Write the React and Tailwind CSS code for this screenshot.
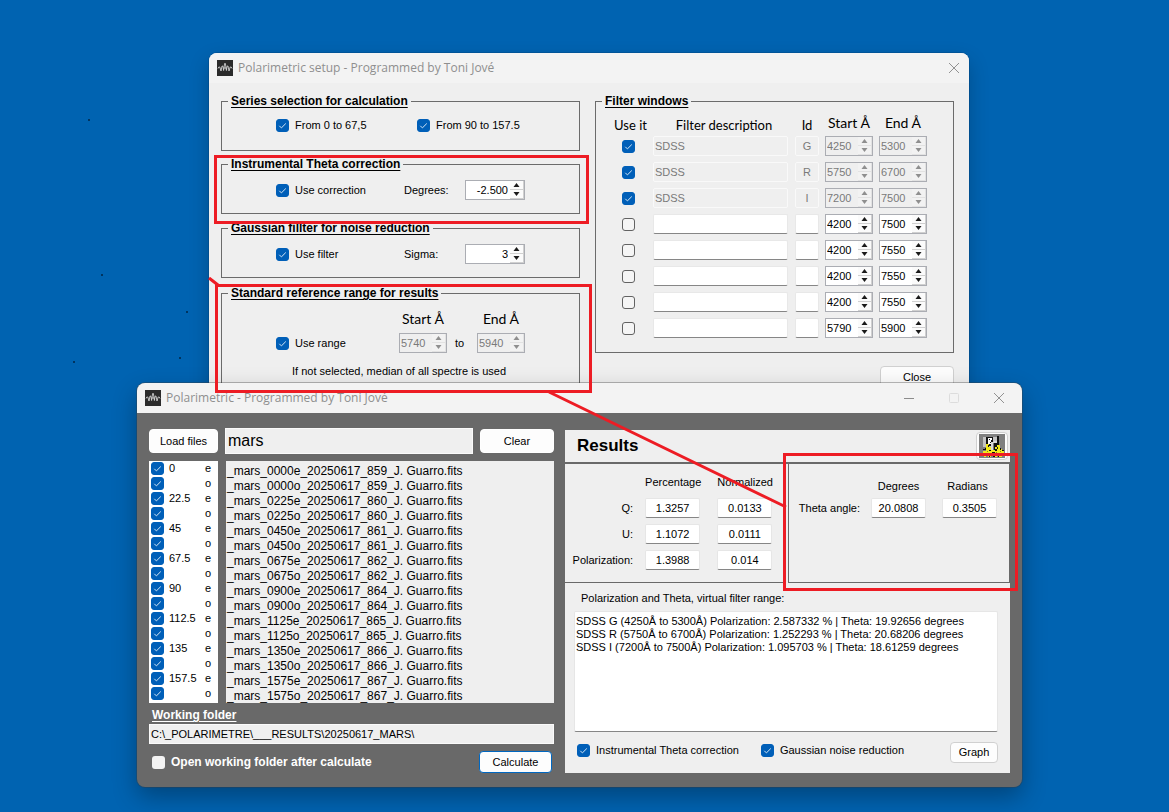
import React, { useId } from "react";

const FILTERS = [
  { on: true, name: "SDSS", id: "G", start: "4250", end: "5300" },
  { on: true, name: "SDSS", id: "R", start: "5750", end: "6700" },
  { on: true, name: "SDSS", id: "I", start: "7200", end: "7500" },
  { on: false, name: "", id: "", start: "4200", end: "7500" },
  { on: false, name: "", id: "", start: "4200", end: "7550" },
  { on: false, name: "", id: "", start: "4200", end: "7550" },
  { on: false, name: "", id: "", start: "4200", end: "7550" },
  { on: false, name: "", id: "", start: "5790", end: "5900" },
];

const ANGLES = ["0", "22.5", "45", "67.5", "90", "112.5", "135", "157.5"];

const SERIES = ANGLES.flatMap((angle) => [
  { angle, text: angle, ray: "e" },
  { angle, text: "", ray: "o" },
]);

const FILES = [
  "_mars_0000e_20250617_859_J. Guarro.fits",
  "_mars_0000o_20250617_859_J. Guarro.fits",
  "_mars_0225e_20250617_860_J. Guarro.fits",
  "_mars_0225o_20250617_860_J. Guarro.fits",
  "_mars_0450e_20250617_861_J. Guarro.fits",
  "_mars_0450o_20250617_861_J. Guarro.fits",
  "_mars_0675e_20250617_862_J. Guarro.fits",
  "_mars_0675o_20250617_862_J. Guarro.fits",
  "_mars_0900e_20250617_864_J. Guarro.fits",
  "_mars_0900o_20250617_864_J. Guarro.fits",
  "_mars_1125e_20250617_865_J. Guarro.fits",
  "_mars_1125o_20250617_865_J. Guarro.fits",
  "_mars_1350e_20250617_866_J. Guarro.fits",
  "_mars_1350o_20250617_866_J. Guarro.fits",
  "_mars_1575e_20250617_867_J. Guarro.fits",
  "_mars_1575o_20250617_867_J. Guarro.fits",
];

const VIRTUAL = [
  "SDSS G (4250Å to 5300Å) Polarization: 2.587332 % | Theta: 19.92656 degrees",
  "SDSS R (5750Å to 6700Å) Polarization: 1.252293 % | Theta: 20.68206 degrees",
  "SDSS I (7200Å to 7500Å) Polarization: 1.095703 % | Theta: 18.61259 degrees",
].join("\n");

const STOKES = [
  { label: "Q:", pct: "1.3257", norm: "0.0133" },
  { label: "U:", pct: "1.1072", norm: "0.0111" },
  { label: "Polarization:", pct: "1.3988", norm: "0.014" },
];

const SPECKS = "M88 119h2v2h-2zM101 274h2v2h-2zM186 311h2v2h-2zM179 357h2v2h-2zM73 361h2v2h-2z";

function Tick({ id, label, on = true, plain = false }) {
  return (
    <span className="grid size-[13px] shrink-0">
      <input
        id={id}
        type="checkbox"
        defaultChecked={on}
        aria-label={label}
        className={
          plain
            ? "peer size-[13px] appearance-none rounded-[3px] bg-[#f3f3f3] [grid-area:1/1] checked:bg-[#005fb8]"
            : "peer size-[13px] appearance-none rounded-[3px] border border-[#626262] bg-[#f5f5f5] [grid-area:1/1] checked:border-[#005fb8] checked:bg-[#005fb8]"
        }
      />
      <svg
        viewBox="0 0 13 13"
        fill="none"
        stroke="#d5e6f5"
        strokeWidth="1"
        className="pointer-events-none invisible size-[13px] [grid-area:1/1] peer-checked:visible"
      >
        <path d="M3.3 6.800 5.400 8.900 9.800 4.500" />
      </svg>
    </span>
  );
}

function Check({ children }) {
  const id = useId();
  return (
    <div className="flex items-center gap-1.5">
      <Tick id={id} />
      <label htmlFor={id} className="whitespace-nowrap">{children}</label>
    </div>
  );
}

function Arrow({ up, disabled }) {
  return (
    <button
      type="button"
      disabled={disabled}
      aria-label={up ? "Increase" : "Decrease"}
      className="flex min-h-0 w-full flex-1 items-center justify-center border-r border-b border-[#d0d0d0] bg-[#fbfbfb] text-[#1a1a1a] disabled:border-[#e2e2e2] disabled:bg-[#f2f2f2] disabled:text-[#8f8f8f]"
    >
      <svg viewBox="0 0 7 4" className="h-1 w-[7px]" fill="currentColor">
        {up ? <path d="M3.5 0 6.500 4h-6z" /> : <path d="M.5 0h6l-3 4z" />}
      </svg>
    </button>
  );
}

function Spinner({ id, value, label, disabled, wide }) {
  return (
    <div
      className={`flex h-5 border border-[#abadb3] ${wide ? "w-[60px]" : "w-12"} ${disabled ? "bg-[#efefef]" : "bg-white"}`}
    >
      <input
        id={id}
        type="text"
        inputMode="decimal"
        defaultValue={value}
        aria-label={label}
        disabled={disabled}
        className={`min-w-0 flex-1 bg-transparent pl-px text-[11px] leading-4 outline-none disabled:text-[#7a7a7a] ${wide ? "pr-0.5 text-right" : ""}`}
      />
      <div className="flex w-3.5 shrink-0 flex-col">
        <Arrow up disabled={disabled} />
        <Arrow disabled={disabled} />
      </div>
    </div>
  );
}

function Group({ title, className, inner, children }) {
  return (
    <fieldset className={`min-w-0 border border-[#6b6b6b] ${className}`}>
      <legend className="ml-1.5 px-[3px] text-[12px] leading-4 font-bold underline underline-offset-2">{title}</legend>
      <div className={inner}>{children}</div>
    </fieldset>
  );
}

function AppIcon() {
  return (
    <svg viewBox="0 0 16 16" className="size-4 shrink-0">
      <rect width="16" height="16" fill="#2b2b2b" />
      <path
        d="M1 8.500 1.800 7h1l1.200 4L5 6h.8l.8 4.500L7.600 3.500h.8l1 7L10.200 6h.8l1 5 1.200-4h1l.8 1.500M6.500 8h3"
        fill="none"
        stroke="#e2e2e2"
        strokeWidth=".8"
        strokeLinejoin="round"
      />
    </svg>
  );
}

function CloseGlyph() {
  return (
    <svg viewBox="0 0 12 12" className="size-3" stroke="#929292">
      <path d="M1 1l10 10M11 1 1 11" />
    </svg>
  );
}

function TitleBar({ title, children }) {
  return (
    <header className="flex h-[30px] items-center gap-[5px] bg-[#f3f3f3] pl-2">
      <AppIcon />
      <h1 className="flex-1 font-['Open_Sans',sans-serif] text-[12px] leading-4 text-[#8f8f8f]">{title}</h1>
      {children}
    </header>
  );
}

function PushButton({ className, children }) {
  return (
    <button type="button" className={`rounded-[4px] border bg-[#fdfdfd] text-[11px] ${className}`}>
      {children}
    </button>
  );
}

function Field({ label, value }) {
  return (
    <input
      type="text"
      readOnly
      aria-label={label}
      defaultValue={value}
      className="block h-5 w-[55px] rounded-[2px] border border-[#e6e6e6] border-b-[#868686] bg-white text-center text-[11px] leading-4 outline-none"
    />
  );
}

function GearIcon() {
  return (
    <svg viewBox="0 0 26 24" className="h-6 w-[26px]" shapeRendering="crispEdges">
      <path fill="#808080" d="M0 0h26v24H0z" />
      <path fill="#c3c3c3" d="M4 3h14v10H4z" />
      <path fill="#111" d="M7 3h7v9H7zM18 2h2v12h-2zM15 8h4v8h-4z" />
      <path fill="#fff" d="M9 4h4v2h-1v2h1v2H9z" />
      <path fill="#111" d="M10 5h1v1h-1zM11 8h1v1h-1z" />
      <path fill="#d9d9d9" d="M12 8h3v9h-3zM15 7h3v2h-3z" />
      <path fill="#777" d="M14 9h1v7h-1z" />
      <path
        fill="#f2ea1a"
        d="M7 10h3v3h2v3h4v-3h2v-2h3v4h2v2h2v3h-2v3h-3v-1h-2v1h-2v-1h-4v1h-3v-1H7v1H5v-3H4v-3h3z"
      />
      <path fill="#111" d="M4 15h3v1H4zM6 14h1v1H6zM9 11h1v2H9zM10 16h2v1h-2zM16 15h2v2h-2zM18 13h1v2h-1zM21 14h1v2h-1zM23 16h2v1h-2zM4 20h2v2H4zM9 19h2v1H9zM13 18h3v1h-3zM19 19h2v1h-2zM10 21h1v2h-1zM14 21h2v2h-2zM19 21h1v2h-1zM24 19h1v3h-1z" />
      <path fill="#8a8420" d="M8 17h1v1H8zM12 20h1v1h-1zM17 18h1v1h-1zM21 17h1v1h-1z" />
    </svg>
  );
}

function SetupWindow() {
  const ids = { deg: useId(), sigma: useId() };
  return (
    <section className="absolute top-[53px] left-[209px] w-[760px] overflow-hidden rounded-lg bg-[#efefef] shadow-[0_0_0_1px_rgba(0,50,100,0.25),0_8px_20px_rgba(0,0,0,0.22)]">
      <TitleBar title="Polarimetric setup - Programmed by Toni Jové">
        <button type="button" aria-label="Close window" className="flex h-full w-[30px] items-center justify-center">
          <CloseGlyph />
        </button>
      </TitleBar>
      <div className="flex gap-[15px] px-[15px] pt-2.5 pb-4 pl-3">
        <div className="w-[359px]">
          <Group title="Series selection for calculation" className="mb-[5px] h-[58px]" inner="pt-1.5 pl-[54px]">
            <div className="grid h-5 grid-cols-[141px_auto] items-center">
              <Check>From 0 to 67,5</Check>
              <Check>From 90 to 157.5</Check>
            </div>
          </Group>
          <Group title="Instrumental Theta correction" className="mb-1.5 h-[58px]" inner="pt-2 pl-[54px]">
            <div className="grid h-5 grid-cols-[128px_61px_auto] items-center">
              <Check>Use correction</Check>
              <label htmlFor={ids.deg}>Degrees:</label>
              <Spinner id={ids.deg} value="-2.500" wide />
            </div>
          </Group>
          <Group title="Gaussian fillter for noise reduction" className="mb-[7px] h-[58px]" inner="pt-2 pl-[54px]">
            <div className="grid h-5 grid-cols-[128px_61px_auto] items-center">
              <Check>Use filter</Check>
              <label htmlFor={ids.sigma}>Sigma:</label>
              <Spinner id={ids.sigma} value="3" wide />
            </div>
          </Group>
          <Group title="Standard reference range for results" className="h-[110px]" inner="pt-2 pl-[54px]">
            <div className="grid grid-cols-[123px_48px_30px_48px] items-center gap-y-1">
              <span />
              <span className="text-center font-[Lato,sans-serif] text-sm leading-5 whitespace-nowrap">Start Å</span>
              <span />
              <span className="text-center font-[Lato,sans-serif] text-sm leading-5 whitespace-nowrap">End Å</span>
              <Check>Use range</Check>
              <Spinner label="Range start" value="5740" disabled />
              <span className="pl-2">to</span>
              <Spinner label="Range end" value="5940" disabled />
            </div>
            <p className="pt-2.5 pl-4 leading-4">If not selected, median of all spectre is used</p>
          </Group>
        </div>
        <div className="flex-1">
          <Group title="Filter windows" className="h-[260px]" inner="pl-2">
            <table className="border-collapse">
              <thead className="font-[Lato,sans-serif]">
                <tr className="h-6 align-bottom">
                  <th className="w-[49px] pl-1 text-[13px] leading-4 font-normal">Use it</th>
                  <th className="w-[142px] text-[13px] leading-4 font-normal">Filter description</th>
                  <th className="w-[30px] pr-1.5 text-[13px] leading-4 font-normal">Id</th>
                  <th className="w-[54px] pr-1.5 text-sm leading-5 font-normal whitespace-nowrap">Start Å</th>
                  <th className="w-12 text-sm leading-5 font-normal whitespace-nowrap">End Å</th>
                </tr>
              </thead>
              <tbody>
                {FILTERS.map((f, i) => (
                  <tr key={i} className="h-[26px]">
                    <td>
                      <div className="flex justify-center">
                        <Tick on={f.on} label={`Use filter ${i + 1}`} />
                      </div>
                    </td>
                    <td>
                      <input
                        type="text"
                        aria-label={`Description of filter ${i + 1}`}
                        defaultValue={f.name}
                        disabled={f.on}
                        className="block h-5 w-[135px] rounded-[2px] border border-[#e8e8e8] border-b-[#868686] bg-white px-px text-[11px] leading-4 disabled:border-[#f9f9f9] disabled:bg-[#efefef] disabled:text-[#7a7a7a]"
                      />
                    </td>
                    <td>
                      <input
                        type="text"
                        aria-label={`Id of filter ${i + 1}`}
                        defaultValue={f.id}
                        disabled={f.on}
                        className="block h-5 w-6 rounded-[2px] border border-[#e8e8e8] border-b-[#868686] bg-white text-center text-[11px] leading-4 disabled:border-[#f9f9f9] disabled:bg-[#efefef] disabled:text-[#7a7a7a]"
                      />
                    </td>
                    <td>
                      <Spinner label={`Start of filter ${i + 1}`} value={f.start} disabled={f.on} />
                    </td>
                    <td>
                      <Spinner label={`End of filter ${i + 1}`} value={f.end} disabled={f.on} />
                    </td>
                  </tr>
                ))}
              </tbody>
            </table>
          </Group>
          <div className="flex justify-end pt-[13px]">
            <PushButton className="h-[22px] w-[74px] border-[#d0d0d0]">Close</PushButton>
          </div>
        </div>
      </div>
    </section>
  );
}

function FilesPane() {
  const ids = { folder: useId(), open: useId() };
  return (
    <div className="flex w-[405px] flex-col">
      <div className="flex items-center gap-[7px]">
        <PushButton className="h-6 w-[69px] border-white">Load files</PushButton>
        <input
          type="text"
          aria-label="Object name"
          defaultValue="mars"
          className="h-[26px] min-w-0 flex-1 border border-[#fafafa] bg-[#efefef] px-0.5 text-base outline-none"
        />
        <PushButton className="h-6 w-[74px] border-white">Clear</PushButton>
      </div>
      <div className="mt-[7px] flex h-[242px] gap-2">
        <ul className="w-[69px] bg-white pl-0.5">
          {SERIES.map((s, i) => (
            <li key={i} className="flex h-[15px] items-center">
              <Tick label={`${s.angle} ${s.ray}`} />
              <span className="w-[41px] pl-[5px]">{s.text}</span>
              <span>{s.ray}</span>
            </li>
          ))}
        </ul>
        <ul className="flex-1 bg-[#efefef] pt-[3px] pl-px text-xs">
          {FILES.map((f) => (
            <li key={f} className="h-[15px] leading-[15px] whitespace-nowrap">{f}</li>
          ))}
        </ul>
      </div>
      <label htmlFor={ids.folder} className="mt-1 pl-[3px] text-[12px] leading-4 font-bold text-white underline underline-offset-2">
        Working folder
      </label>
      <input
        id={ids.folder}
        type="text"
        defaultValue="C:\_POLARIMETRE\___RESULTS\20250617_MARS\"
        className="mt-px h-5 border border-[#fafafa] bg-[#efefef] px-px text-[11px] leading-4 outline-none"
      />
      <div className="mt-[7px] flex items-center gap-1.5 pr-0.5 pl-[3px]">
        <Tick id={ids.open} on={false} plain />
        <label htmlFor={ids.open} className="flex-1 text-[12px] font-bold text-white">
          Open working folder after calculate
        </label>
        <PushButton className="h-[22px] w-[73px] border-[#0067c0]">Calculate</PushButton>
      </div>
    </div>
  );
}

function ResultsPane() {
  const rangeId = useId();
  return (
    <div className="flex w-[445px] flex-col bg-[#efefef]">
      <div className="flex h-8 items-center justify-between pr-0.5 pl-3">
        <h2 className="text-[17px] leading-5 font-bold">Results</h2>
        <button type="button" aria-label="Settings" className="rounded-[4px] border border-[#d0d0d0] bg-[#fdfdfd] px-0.5 py-px">
          <GearIcon />
        </button>
      </div>
      <div className="flex h-[121px] gap-1 border-t-2 border-[#696969]">
        <div className="w-[219px] border-r border-b border-[#696969] pt-[5px] pr-2.5">
          <table className="w-full border-collapse">
            <thead>
              <tr className="h-[26px]">
                <td />
                <th className="w-[71px] pr-4 font-normal">Percentage</th>
                <th className="w-[55px] font-normal">Normalized</th>
              </tr>
            </thead>
            <tbody>
              {STOKES.map((r) => (
                <tr key={r.label} className="h-[26px]">
                  <th className="pr-3 text-right font-normal">{r.label}</th>
                  <td><Field label={`${r.label} percentage`} value={r.pct} /></td>
                  <td><Field label={`${r.label} normalized`} value={r.norm} /></td>
                </tr>
              ))}
            </tbody>
          </table>
        </div>
        <div className="flex-1 border border-t-0 border-[#696969] pt-[13px] pr-3">
          <table className="w-full border-collapse">
            <thead>
              <tr className="h-[18px]">
                <td />
                <th className="w-[71px] pr-4 font-normal">Degrees</th>
                <th className="w-[55px] pr-1 font-normal">Radians</th>
              </tr>
            </thead>
            <tbody>
              <tr className="h-[26px]">
                <th className="pr-[11px] text-right font-normal">Theta angle:</th>
                <td><Field label="Theta angle in degrees" value="20.0808" /></td>
                <td><Field label="Theta angle in radians" value="0.3505" /></td>
              </tr>
            </tbody>
          </table>
        </div>
      </div>
      <div className="px-[9px] pt-[7px] pr-3 pb-2.5">
        <label htmlFor={rangeId} className="block pl-[7px] leading-4">
          Polarization and Theta, virtual filter range:
        </label>
        <textarea
          id={rangeId}
          readOnly
          defaultValue={VIRTUAL}
          className="mt-[5px] block h-[121px] w-full resize-none rounded-[2px] border border-[#e6e6e6] border-b-[#868686] bg-white px-px py-[3px] text-[11px] leading-[13px] outline-none"
        />
        <div className="flex items-start pt-2.5 pl-[3px]">
          <div className="flex flex-1 gap-[22px] pt-0.5">
            <Check>Instrumental Theta correction</Check>
            <Check>Gaussian noise reduction</Check>
          </div>
          <PushButton className="h-[21px] w-12 border-[#d0d0d0]">Graph</PushButton>
        </div>
      </div>
    </div>
  );
}

function MainWindow() {
  return (
    <section className="absolute top-[383px] left-[137px] w-[885px] overflow-hidden rounded-lg bg-[#696969] shadow-[0_0_0_1px_rgba(60,60,60,0.35),0_10px_24px_rgba(0,0,0,0.3)]">
      <TitleBar title="Polarimetric - Programmed by Toni Jové">
        <div className="flex h-full items-center">
          <button type="button" aria-label="Minimize" className="flex h-full w-[45px] items-center justify-center">
            <svg viewBox="0 0 12 12" className="size-3" stroke="#8c8c8c"><path d="M1 6.500h10" /></svg>
          </button>
          <button type="button" aria-label="Maximize" disabled className="flex h-full w-[45px] items-center justify-center">
            <svg viewBox="0 0 12 12" className="size-3" fill="none" stroke="#dcdcdc"><rect x="1.500" y="1.500" width="9" height="9" rx="1" /></svg>
          </button>
          <button type="button" aria-label="Close" className="flex h-full w-[46px] items-center justify-center">
            <CloseGlyph />
          </button>
        </div>
      </TitleBar>
      <div className="flex justify-between pt-[15px] pr-3 pb-3.5 pl-3">
        <FilesPane />
        <div className="flex items-start pt-0.5">
          <ResultsPane />
        </div>
      </div>
    </section>
  );
}

function Annotations() {
  return (
    <svg
      viewBox="0 0 1169 812"
      className="pointer-events-none absolute top-0 left-0 h-[812px] w-[1169px]"
      fill="none"
      stroke="#ed1c24"
      strokeWidth="3"
    >
      <rect x="215.500" y="156.500" width="372" height="66" />
      <rect x="216.500" y="285.500" width="374" height="106" />
      <rect x="784.500" y="454.500" width="232" height="135" />
      <path d="M209 278l9 7M549 392l237 115" />
    </svg>
  );
}

export default function App() {
  return (
    <main className="relative min-h-screen overflow-hidden bg-[#0063b1] font-['Liberation_Sans',Arial,sans-serif] text-[11px] leading-[13px] text-black">
      <svg viewBox="0 0 1169 812" className="absolute top-0 left-0 h-[812px] w-[1169px]">
        <path d={SPECKS} fill="#00345f" />
      </svg>
      <SetupWindow />
      <MainWindow />
      <Annotations />
    </main>
  );
}
